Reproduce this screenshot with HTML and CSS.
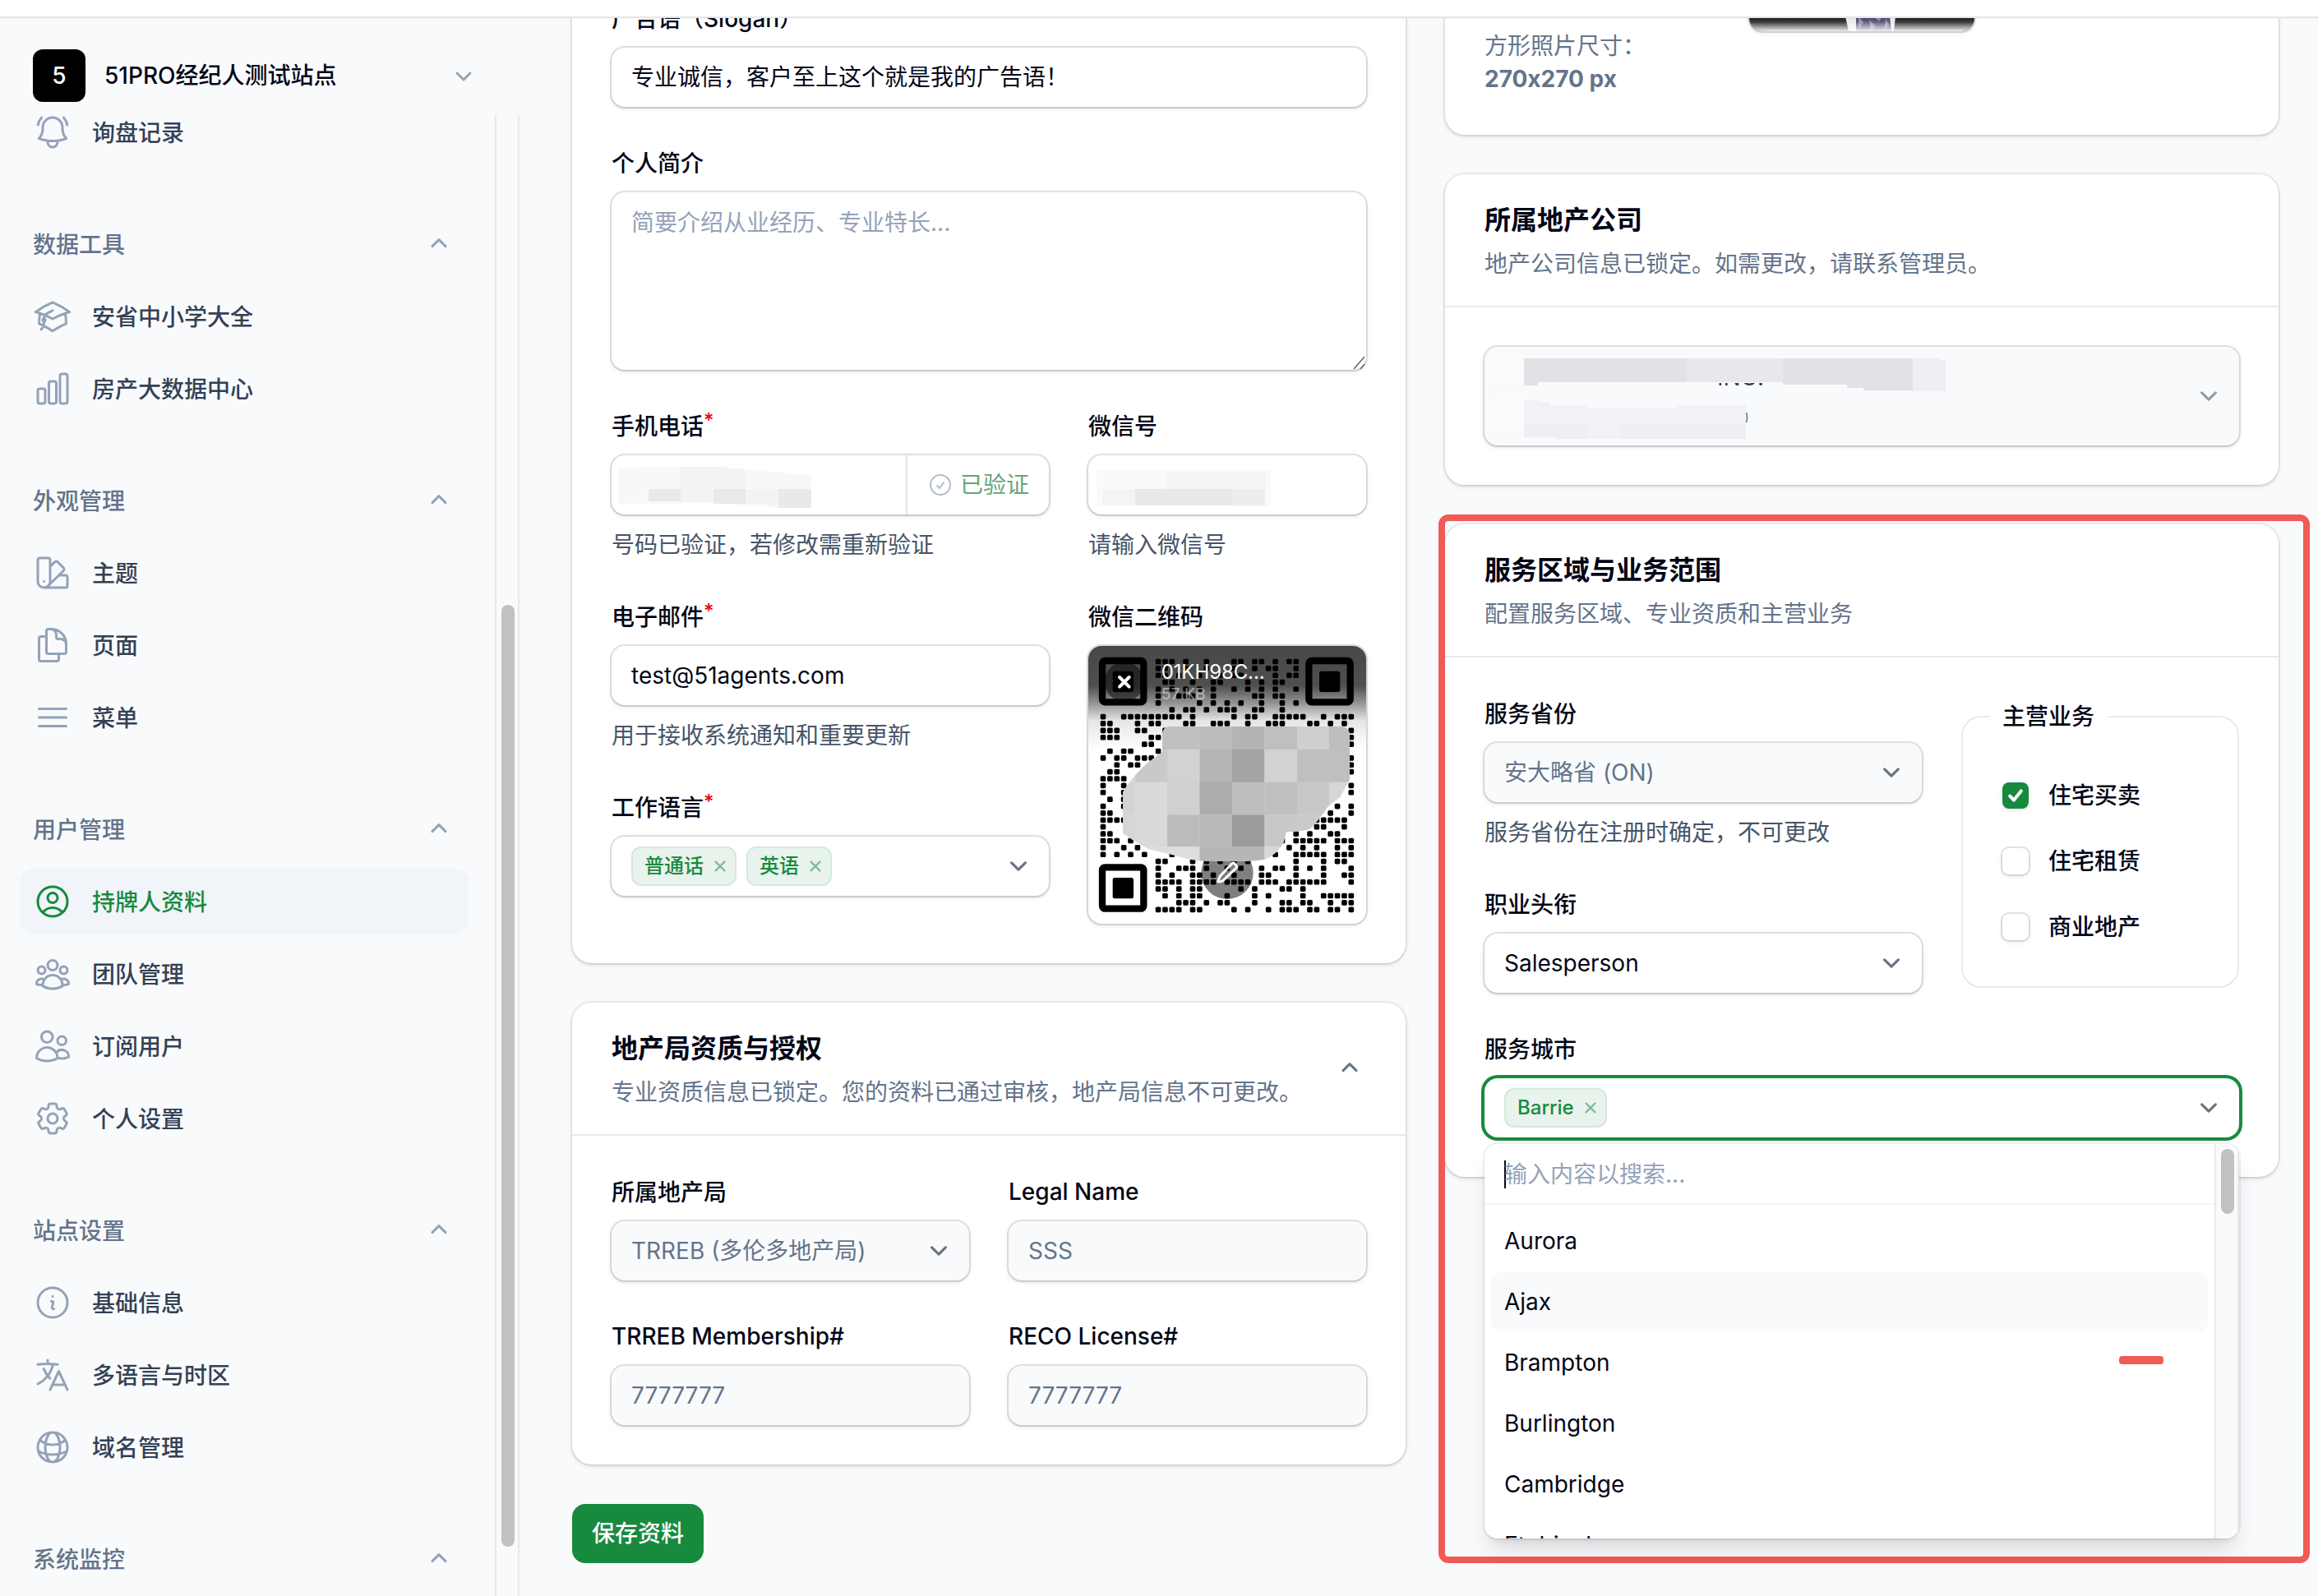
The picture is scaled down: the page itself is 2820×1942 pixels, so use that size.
FILE: index.html
```html
<!DOCTYPE html>
<html lang="zh-CN">
<head>
  <meta charset="utf-8">
  <title>持牌人资料</title>
  <link rel="stylesheet" href="styles.css">
</head>
<body>
<svg class="sprite">
  <symbol id="i-bell" viewBox="0 0 24 24"><path d="M14.857 17.082a23.848 23.848 0 0 0 5.454-1.31A8.967 8.967 0 0 1 18 9.75V9A6 6 0 0 0 6 9v.75a8.967 8.967 0 0 1-2.312 6.022c1.733.64 3.56 1.085 5.455 1.31m5.714 0a24.255 24.255 0 0 1-5.714 0m5.714 0a3 3 0 1 1-5.714 0M3.124 7.5A8.969 8.969 0 0 1 5.292 3m13.416 0a8.969 8.969 0 0 1 2.168 4.5"/></symbol>
  <symbol id="i-cap" viewBox="0 0 24 24"><path d="M4.26 10.147a60.438 60.438 0 0 0-.491 6.347A48.62 48.62 0 0 1 12 20.904a48.62 48.62 0 0 1 8.232-4.41 60.46 60.46 0 0 0-.491-6.347m-15.482 0a50.636 50.636 0 0 0-2.658-.813A59.906 59.906 0 0 1 12 3.493a59.903 59.903 0 0 1 10.399 5.84c-.896.248-1.783.52-2.658.814m-15.482 0A50.717 50.717 0 0 1 12 13.489a50.702 50.702 0 0 1 7.74-3.342M6.75 15a.75.75 0 1 0 0-1.5.75.75 0 0 0 0 1.5Zm0 0v-3.675A55.378 55.378 0 0 1 12 8.443m-7.007 11.55A5.981 5.981 0 0 0 6.75 15.75v-1.5"/></symbol>
  <symbol id="i-chart" viewBox="0 0 24 24"><path d="M3 13.125C3 12.504 3.504 12 4.125 12h2.25c.621 0 1.125.504 1.125 1.125v6.75C7.5 20.496 6.996 21 6.375 21h-2.25A1.125 1.125 0 0 1 3 19.875v-6.75ZM9.75 8.625c0-.621.504-1.125 1.125-1.125h2.25c.621 0 1.125.504 1.125 1.125v11.25c0 .621-.504 1.125-1.125 1.125h-2.25a1.125 1.125 0 0 1-1.125-1.125V8.625ZM16.5 4.125c0-.621.504-1.125 1.125-1.125h2.25C20.496 3 21 3.504 21 4.125v15.75c0 .621-.504 1.125-1.125 1.125h-2.25a1.125 1.125 0 0 1-1.125-1.125V4.125Z"/></symbol>
  <symbol id="i-swatch" viewBox="0 0 24 24"><path d="M4.098 19.902a3.75 3.75 0 0 0 5.304 0l6.401-6.402M6.75 21A3.75 3.75 0 0 1 3 17.25V4.125C3 3.504 3.504 3 4.125 3h5.25c.621 0 1.125.504 1.125 1.125v4.072M6.75 21a3.75 3.75 0 0 0 3.75-3.75V8.197M6.75 21h13.125c.621 0 1.125-.504 1.125-1.125v-5.25c0-.621-.504-1.125-1.125-1.125h-4.072M10.5 8.197l2.88-2.88c.438-.439 1.15-.439 1.59 0l3.712 3.713c.44.44.44 1.152 0 1.59l-2.879 2.88M6.75 17.25h.008v.008H6.75v-.008Z"/></symbol>
  <symbol id="i-pages" viewBox="0 0 24 24"><path d="M15.75 17.25v3.375c0 .621-.504 1.125-1.125 1.125h-9.75a1.125 1.125 0 0 1-1.125-1.125V7.875c0-.621.504-1.125 1.125-1.125H6.75a9.06 9.06 0 0 1 1.5.124m7.5 10.376h3.375c.621 0 1.125-.504 1.125-1.125V11.25c0-4.46-3.243-8.161-7.5-8.876a9.06 9.06 0 0 0-1.5-.124H9.375c-.621 0-1.125.504-1.125 1.125v3.5m7.5 10.375H9.375a1.125 1.125 0 0 1-1.125-1.125v-9.25m12 6.625v-1.875a3.375 3.375 0 0 0-3.375-3.375h-1.5a1.125 1.125 0 0 1-1.125-1.125v-1.5a3.375 3.375 0 0 0-3.375-3.375H9.75"/></symbol>
  <symbol id="i-bars" viewBox="0 0 24 24"><path d="M3.75 6.75h16.5M3.75 12h16.5m-16.5 5.25h16.5"/></symbol>
  <symbol id="i-user" viewBox="0 0 24 24"><path d="M17.982 18.725A7.488 7.488 0 0 0 12 15.75a7.488 7.488 0 0 0-5.982 2.975m11.963 0a9 9 0 1 0-11.963 0m11.963 0A8.966 8.966 0 0 1 12 21a8.966 8.966 0 0 1-5.982-2.275M15 9.75a3 3 0 1 1-6 0 3 3 0 0 1 6 0Z"/></symbol>
  <symbol id="i-group" viewBox="0 0 24 24"><path d="M18 18.72a9.094 9.094 0 0 0 3.741-.479 3 3 0 0 0-4.682-2.72m.94 3.198.001.031c0 .225-.012.447-.037.666A11.944 11.944 0 0 1 12 21c-2.17 0-4.207-.576-5.963-1.584A6.062 6.062 0 0 1 6 18.719m12 0a5.971 5.971 0 0 0-.941-3.197m0 0A5.995 5.995 0 0 0 12 12.75a5.995 5.995 0 0 0-5.058 2.772m0 0a3 3 0 0 0-4.681 2.72 8.986 8.986 0 0 0 3.74.477m.94-3.197a5.971 5.971 0 0 0-.94 3.197M15 6.75a3 3 0 1 1-6 0 3 3 0 0 1 6 0Zm6 3a2.25 2.25 0 1 1-4.5 0 2.25 2.25 0 0 1 4.5 0Zm-13.5 0a2.25 2.25 0 1 1-4.5 0 2.25 2.25 0 0 1 4.5 0Z"/></symbol>
  <symbol id="i-users" viewBox="0 0 24 24"><path d="M15 19.128a9.38 9.38 0 0 0 2.625.372 9.337 9.337 0 0 0 4.121-.952 4.125 4.125 0 0 0-7.533-2.493M15 19.128v-.003c0-1.113-.285-2.16-.786-3.07M15 19.128v.106A12.318 12.318 0 0 1 8.624 21c-2.331 0-4.512-.645-6.374-1.766l-.001-.109a6.375 6.375 0 0 1 11.964-3.07M12 6.375a3.375 3.375 0 1 1-6.75 0 3.375 3.375 0 0 1 6.75 0Zm8.25 2.25a2.625 2.625 0 1 1-5.25 0 2.625 2.625 0 0 1 5.25 0Z"/></symbol>
  <symbol id="i-cog" viewBox="0 0 24 24"><path d="M9.594 3.94c.09-.542.56-.94 1.11-.94h2.593c.55 0 1.02.398 1.11.94l.213 1.281c.063.374.313.686.645.87.074.04.147.083.22.127.325.196.72.257 1.075.124l1.217-.456a1.125 1.125 0 0 1 1.37.49l1.296 2.247a1.125 1.125 0 0 1-.26 1.431l-1.003.827c-.293.241-.438.613-.43.992a7.723 7.723 0 0 1 0 .255c-.008.378.137.75.43.991l1.004.827c.424.35.534.955.26 1.43l-1.298 2.247a1.125 1.125 0 0 1-1.369.491l-1.217-.456c-.355-.133-.75-.072-1.076.124a6.47 6.47 0 0 1-.22.128c-.331.183-.581.495-.644.869l-.213 1.281c-.09.543-.56.94-1.11.94h-2.594c-.55 0-1.019-.398-1.11-.94l-.213-1.281c-.062-.374-.312-.686-.644-.87a6.52 6.52 0 0 1-.22-.127c-.325-.196-.72-.257-1.076-.124l-1.217.456a1.125 1.125 0 0 1-1.369-.49l-1.297-2.247a1.125 1.125 0 0 1 .26-1.431l1.004-.827c.292-.24.437-.613.43-.991a6.932 6.932 0 0 1 0-.255c.007-.38-.138-.751-.43-.992l-1.004-.827a1.125 1.125 0 0 1-.26-1.43l1.297-2.247a1.125 1.125 0 0 1 1.37-.491l1.216.456c.356.133.751.072 1.076-.124.072-.044.146-.086.22-.128.332-.183.582-.495.644-.869l.214-1.28Z"/><path d="M15 12a3 3 0 1 1-6 0 3 3 0 0 1 6 0Z"/></symbol>
  <symbol id="i-info" viewBox="0 0 24 24"><path d="m11.25 11.25.041-.02a.75.75 0 0 1 1.063.852l-.708 2.836a.75.75 0 0 0 1.063.853l.041-.021M21 12a9 9 0 1 1-18 0 9 9 0 0 1 18 0Zm-9-3.75h.008v.008H12V8.25Z"/></symbol>
  <symbol id="i-lang" viewBox="0 0 24 24"><path d="m10.5 21 5.25-11.25L21 21m-9-3h7.5M3 5.621a48.474 48.474 0 0 1 6-.371m0 0c1.12 0 2.233.038 3.334.114M9 5.25V3m3.334 2.364C11.176 10.658 7.69 15.08 3 17.502m9.334-12.138c.896.061 1.785.147 2.666.257m-4.589 8.495a18.023 18.023 0 0 1-3.827-5.802"/></symbol>
  <symbol id="i-globe" viewBox="0 0 24 24"><path d="M12 21a9.004 9.004 0 0 0 8.716-6.747M12 21a9.004 9.004 0 0 1-8.716-6.747M12 21c2.485 0 4.5-4.03 4.5-9S14.485 3 12 3m0 18c-2.485 0-4.5-4.03-4.5-9S9.515 3 12 3m0 0a8.997 8.997 0 0 1 7.843 4.582M12 3a8.997 8.997 0 0 0-7.843 4.582m15.686 0A11.953 11.953 0 0 1 12 10.5c-2.998 0-5.74-1.1-7.843-2.918m15.686 0A8.959 8.959 0 0 1 21 12c0 .778-.099 1.533-.284 2.253m0 0A17.919 17.919 0 0 1 12 16.5c-3.162 0-6.133-.815-8.716-2.247m0 0A9.015 9.015 0 0 1 3 12c0-1.605.42-3.113 1.157-4.418"/></symbol>
  <symbol id="i-check-circle" viewBox="0 0 24 24"><path d="M9 12.75 11.25 15 15 9.75M21 12a9 9 0 1 1-18 0 9 9 0 0 1 18 0Z"/></symbol>
  <symbol id="i-up" viewBox="0 0 20 20"><path d="m6 11.3 4-4 4 4"/></symbol>
  <symbol id="i-down" viewBox="0 0 20 20"><path d="m6 8.5 4 4 4-4"/></symbol>
  <symbol id="i-select" viewBox="0 0 20 20"><path d="m6 8 4 4 4-4"/></symbol>
  <symbol id="i-x" viewBox="0 0 20 20"><path class="bold" d="m5.500 5.500 9 9m0-9-9 9"/></symbol>
</svg>

<div class="topbar"></div>
<div class="layout">
  <aside class="sidebar">
    <div class="tenant">
      <span class="tenant-avatar">5</span>
      <span class="tenant-name">51PRO经纪人测试站点</span>
      <svg class="chev"><use href="#i-down"/></svg>
    </div>
    <div class="nav-wrap">
      <nav class="nav">
        <div class="nav-group">
          <a class="nav-item"><svg><use href="#i-bell"/></svg><span>询盘记录</span></a>
        </div>
        <div class="nav-group">
          <div class="nav-title"><span>数据工具</span><svg class="chev"><use href="#i-up"/></svg></div>
          <a class="nav-item"><svg><use href="#i-cap"/></svg><span>安省中小学大全</span></a>
          <a class="nav-item"><svg><use href="#i-chart"/></svg><span>房产大数据中心</span></a>
        </div>
        <div class="nav-group">
          <div class="nav-title"><span>外观管理</span><svg class="chev"><use href="#i-up"/></svg></div>
          <a class="nav-item"><svg><use href="#i-swatch"/></svg><span>主题</span></a>
          <a class="nav-item"><svg><use href="#i-pages"/></svg><span>页面</span></a>
          <a class="nav-item"><svg><use href="#i-bars"/></svg><span>菜单</span></a>
        </div>
        <div class="nav-group">
          <div class="nav-title"><span>用户管理</span><svg class="chev"><use href="#i-up"/></svg></div>
          <a class="nav-item active"><svg><use href="#i-user"/></svg><span>持牌人资料</span></a>
          <a class="nav-item"><svg><use href="#i-group"/></svg><span>团队管理</span></a>
          <a class="nav-item"><svg><use href="#i-users"/></svg><span>订阅用户</span></a>
          <a class="nav-item"><svg><use href="#i-cog"/></svg><span>个人设置</span></a>
        </div>
        <div class="nav-group">
          <div class="nav-title"><span>站点设置</span><svg class="chev"><use href="#i-up"/></svg></div>
          <a class="nav-item"><svg><use href="#i-info"/></svg><span>基础信息</span></a>
          <a class="nav-item"><svg><use href="#i-lang"/></svg><span>多语言与时区</span></a>
          <a class="nav-item"><svg><use href="#i-globe"/></svg><span>域名管理</span></a>
        </div>
        <div class="nav-group">
          <div class="nav-title"><span>系统监控</span><svg class="chev"><use href="#i-up"/></svg></div>
        </div>
      </nav>
      <div class="scrollbar"><div class="thumb"></div></div>
    </div>
  </aside>

  <main class="main">
    <div class="col">
      <section class="card card-cut">
        <div class="card-body profile">
          <div class="field">
            <label>广告语（Slogan）</label>
            <div class="input">专业诚信，客户至上这个就是我的广告语！</div>
          </div>
          <div class="field">
            <label>个人简介</label>
            <div class="input textarea">简要介绍从业经历、专业特长...
              <svg class="resizer" viewBox="0 0 16 18"><path d="M1 17 14 2M9 17l5-6"/></svg>
            </div>
          </div>
          <div class="grid-wide">
            <div class="stack">
              <div class="field">
                <label>手机电话<sup>*</sup></label>
                <div class="input phone">
                  <svg class="redacted" viewBox="0 0 358 72">
                    <path fill="#f8f8f8" d="M8 16h27v-2h105v2h22v2h30v2h20v3h31v41h-53v-3h-39v-4H84v2H8z"/>
                    <path fill="#f3f3f3" d="M84 14h56v3h22v24H84zM84 41h158v20H190v-2h-27v-2H84z"/>
                    <path fill="#e9e9e9" d="M45 41h39v15H45zM124 41h39v18h-39zM203 41h40v23h-40z"/>
                  </svg>
                  <div class="suffix"><svg><use href="#i-check-circle"/></svg>已验证</div>
                </div>
                <p class="hint">号码已验证，若修改需重新验证</p>
              </div>
              <div class="field">
                <label>电子邮件<sup>*</sup></label>
                <div class="input">test@51agents.com</div>
                <p class="hint">用于接收系统通知和重要更新</p>
              </div>
              <div class="field">
                <label>工作语言<sup>*</sup></label>
                <div class="input select">
                  <div class="chips">
                    <span class="chip">普通话<svg><use href="#i-x"/></svg></span>
                    <span class="chip">英语<svg><use href="#i-x"/></svg></span>
                  </div>
                  <svg class="arrow"><use href="#i-select"/></svg>
                </div>
              </div>
            </div>
            <div class="stack">
              <div class="field">
                <label>微信号</label>
                <div class="input flush">
                  <svg class="redacted" viewBox="0 0 338 72">
                    <path fill="#fafafa" d="M10 18h212v44H10z"/>
                    <path fill="#f4f4f4" d="M96 20h119v21H96zM17 41h40v19H17z"/>
                    <path fill="#e9e9e9" d="M57 41h118v20H57z"/>
                    <path fill="#ededed" d="M175 41h40v20h-40z"/>
                  </svg>
                </div>
                <p class="hint">请输入微信号</p>
              </div>
              <div class="field">
                <label>微信二维码</label>
                <div class="qr">
                  <svg viewBox="12 12 1014 1014">
                    <defs>
                      <linearGradient id="shade" x1="0" y1="0" x2="0" y2="1">
                        <stop offset="0" stop-color="#000" stop-opacity=".72"/>
                        <stop offset=".38" stop-color="#000" stop-opacity=".69"/>
                        <stop offset=".55" stop-color="#000" stop-opacity=".42"/>
                        <stop offset=".72" stop-color="#000" stop-opacity=".1"/>
                        <stop offset="1" stop-color="#000" stop-opacity="0"/>
                      </linearGradient>
                      <clipPath id="smear"><path d="M282 400V335q0-29 28-29h625q31 2 31 34v160l-36 65-45 35q-35 55-65 80-35 12-85 10l-10 40q-25 45-70 62l-60 6H440q-60-3-120-23l-82-20q-50-22-100-60V545q27-45 72-90 40-35 72-55z"/></clipPath>
                    </defs>
                    <g id="modules"></g>
                    <g class="finder">
                      <rect x="63" y="66" width="151" height="151" rx="10"/><rect class="dot" x="101" y="104" width="76" height="76" rx="8"/>
                      <rect x="817" y="66" width="151" height="151" rx="10"/><rect class="dot" x="855" y="104" width="76" height="76" rx="8"/>
                      <rect x="63" y="820" width="151" height="151" rx="10"/><rect class="dot" x="101" y="858" width="76" height="76" rx="8"/>
                    </g>
                    <rect x="12" y="12" width="1014" height="380" fill="url(#shade)"/>
                    <circle cx="143" cy="143" r="72" fill="#000" fill-opacity=".5"/>
                    <path d="m126 126 35 35m0-35-35 35" stroke="#fff" stroke-width="12" stroke-linecap="round"/>
                    <text x="278" y="131" class="file-name" textLength="378">01KH98C...</text>
                    <text x="278" y="208" class="file-size" textLength="162">57 KB</text>
                    <circle cx="519" cy="841" r="95" fill="#000" fill-opacity=".5"/>
                    <path d="m485 872 8-20 44-46q4-4 8 0l7 8q4 4 0 8l-48 46q-4 4-10 4z" fill="none" stroke="#fff" stroke-width="9" stroke-linejoin="round"/>
                    <g id="mosaic" clip-path="url(#smear)"></g>
                  </svg>
                </div>
              </div>
            </div>
          </div>
        </div>
      </section>

      <section class="card">
        <header class="card-head">
          <div>
            <h3>地产局资质与授权</h3>
            <p>专业资质信息已锁定。您的资料已通过审核，地产局信息不可更改。</p>
          </div>
          <svg class="chev"><use href="#i-up"/></svg>
        </header>
        <div class="card-body grid-half">
          <div class="field">
            <label>所属地产局</label>
            <div class="input select disabled">TRREB (多伦多地产局)<svg class="arrow"><use href="#i-select"/></svg></div>
          </div>
          <div class="field">
            <label lang="en">Legal Name</label>
            <div class="input disabled">SSS</div>
          </div>
          <div class="field">
            <label lang="en">TRREB Membership#</label>
            <div class="input disabled">7777777</div>
          </div>
          <div class="field">
            <label lang="en">RECO License#</label>
            <div class="input disabled">7777777</div>
          </div>
        </div>
      </section>

      <button class="save">保存资料</button>
    </div>

    <div class="col">
      <section class="card card-cut">
        <div class="card-body photo">
          <p class="photo-size">方形照片尺寸：<br><b>270x270 px</b></p>
          <div class="avatar">
            <svg viewBox="0 0 274 18" preserveAspectRatio="none">
              <defs><linearGradient id="fade" x1="0" y1="0" x2="0" y2="1"><stop offset="0" stop-color="#fff" stop-opacity="0"/><stop offset=".35" stop-color="#fff" stop-opacity=".12"/><stop offset="1" stop-color="#fff" stop-opacity=".92"/></linearGradient></defs>
              <path fill="#1d1b1a" d="M0 0h274v18H0z"/>
              <path fill="#e9e9ea" d="M117 0h61l-2 18h-55z"/>
              <path fill="#4b4666" d="M130 0h41l2 18h-43z"/>
              <path fill="#8a86a6" d="M133 0l6 7-6 8zM146 4l8 8-6 6zM152 0l6 6 4-6zM166 2l4 8-6 8z"/>
              <path fill="url(#fade)" d="M0 0h274v18H0z"/>
            </svg>
          </div>
        </div>
      </section>

      <section class="card">
        <header class="card-head">
          <div>
            <h3>所属地产公司</h3>
            <p>地产公司信息已锁定。如需更改，请联系管理员。</p>
          </div>
        </header>
        <div class="card-body">
          <div class="input select disabled company">
            <svg class="redacted" viewBox="0 0 700 120">
              <text x="283" y="47" class="company-name">INC.</text>
              <path fill="#fbfbfc" d="M8 10h370v4h180v30H8zM8 62h50v42H8z"/>
              <path fill="#e1e2e5" d="M48 14h197v29H65v4H48zM363 14h158v39h-60v-3h-20v-4h-78z"/>
              <path fill="#e7e8eb" d="M245 14h118v29H245z"/>
              <path fill="#eeeff2" d="M521 14h34v2h6v38h-40z"/>
              <path fill="#f1f2f5" d="M48 65h18v2h14v4h45v3h110v-3h83v41H86v-2H48z"/>
              <path fill="#eeeff3" d="M48 94h77v18H86v-2H48zM165 94h153v18H165z"/>
              <path stroke="#64748b" fill="none" stroke-width="1.5" d="M318.500 80q2 6 0 12"/>
            </svg>
            <svg class="arrow"><use href="#i-select"/></svg>
          </div>
        </div>
      </section>

      <section class="card service">
        <header class="card-head">
          <div>
            <h3>服务区域与业务范围</h3>
            <p>配置服务区域、专业资质和主营业务</p>
          </div>
        </header>
        <div class="card-body">
          <div class="grid-wide">
            <div class="stack">
              <div class="field">
                <label>服务省份</label>
                <div class="input select disabled">安大略省 (ON)<svg class="arrow"><use href="#i-select"/></svg></div>
                <p class="hint">服务省份在注册时确定，不可更改</p>
              </div>
              <div class="field">
                <label>职业头衔</label>
                <div class="input select">Salesperson<svg class="arrow"><use href="#i-select"/></svg></div>
              </div>
            </div>
            <fieldset>
              <legend>主营业务</legend>
              <div class="check"><span class="box on"><svg viewBox="0 0 16 16"><path d="m4.600 8.300 2.400 2.500 4.400-5.600"/></svg></span>住宅买卖</div>
              <div class="check"><span class="box"></span>住宅租赁</div>
              <div class="check"><span class="box"></span>商业地产</div>
            </fieldset>
          </div>
          <div class="field">
            <label>服务城市</label>
            <div class="input select focus">
              <div class="chips"><span class="chip">Barrie<svg><use href="#i-x"/></svg></span></div>
              <svg class="arrow"><use href="#i-select"/></svg>
              <div class="dropdown">
                <div class="options">
                  <div class="search"><span class="caret"></span>输入内容以搜索...</div>
                  <ul>
                    <li>Aurora</li>
                    <li class="hover">Ajax</li>
                    <li>Brampton</li>
                    <li>Burlington</li>
                    <li>Cambridge</li>
                    <li>Etobicoke</li>
                  </ul>
                </div>
                <div class="scrollbar"><div class="thumb"></div></div>
              </div>
            </div>
          </div>
        </div>
        <div class="mark-box"></div>
        <div class="mark-dash"></div>
      </section>
    </div>
  </main>
</div>

<script>
// QR modules, one list of filled columns per row
var rows = [
  [8,9,10,12,15,19,20,22,23,25,27,28], [8,9,12,15,19,22,24,25,28],
  [8,9,11,14,17,19,20,25,27,28], [9,10,13,16,17,21,23,25,26],
  [8,10,12,14,16,19,21,23,25,28], [8,11,12,13,16,22,23,25,26],
  [8,14,16,18,20,23,26,28], [10,12,13,15,17,18,19,22,23,26],
  [0,3,4,5,6,7,8,9,10,11,13,19,21,22,25,26,27,28,29,32,34,35,36],
  [0,1,5,7,8,12,13,16,17,18,21,24,25,26,30,31,33,35],
  [0,1,2,5,6,9,36], [0,1,2,7,8,36], [6,7,36], [1,3,4,8], [0,2,3,5,6,7,36],
  [2,4,5,36], [1,2,36], [0,1,2,3], [0,3,36], [0,3,36], [1,3], [0,3,34,36],
  [0,1,33,36], [0,1,2,3,31,32,33,34,35], [0,31,32,35], [0,1,28,30,33,34],
  [0,1,2,4,26,28,29,30,31,32,34,35,36], [0,3,5,27,29,31,34,36],
  [0,2,4,6,10,25,28,29,30,31,32,34,35,36], [8,9,13,15,17,19,21,28,32,34,35],
  [8,11,12,13,15,18,20,23,25,26,28,30,32,36], [8,10,13,14,16,19,23,24,28,32,35,36],
  [8,9,10,11,13,14,15,16,18,19,20,21,23,24,25,27,28,29,30,31,32,36],
  [8,9,11,13,14,20,22,26,27,29], [9,13,11,14,18,22,24,29,32,33,34,35,36],
  [11,12,13,15,17,18,22,26,27,29,30,33,35,36],
  [8,9,10,11,13,14,19,21,24,26,27,28,30,31,33,34,36]
];
var step = 25.15;
document.getElementById('modules').innerHTML = rows.map(function (cols, r) {
  return cols.map(function (c) {
    return '<rect x="' + (56 + c * step) + '" y="' + (59 + r * step) + '" width="20" height="20" rx="5"/>';
  }).join('');
}).join('');

// pixelated patch over the code
var xs = [120, 183, 300, 418, 537, 655, 774, 891, 980];
var ys = [300, 390, 509, 628, 745, 810];
var shades = [
  ['c0','c0','c0','bc','b4','bf','cf','be'],
  ['d8','c9','d2','b5','a4','d2','bf','bf'],
  ['d4','da','d0','ac','be','c0','c8','d6'],
  ['d6','d9','bc','ba','9b','c8','ca','ca'],
  ['dc','dc','de','b6','b6','d8','d8','d8']
];
document.getElementById('mosaic').innerHTML = shades.map(function (row, r) {
  return row.map(function (s, c) {
    return '<rect x="' + xs[c] + '" y="' + ys[r] + '" width="' + (xs[c + 1] - xs[c] + 1) + '" height="' + (ys[r + 1] - ys[r] + 1) + '" fill="#' + s + s + s + '"/>';
  }).join('');
}).join('');
</script>
</body>
</html>
```
FILE: styles.css
```css
* {
  box-sizing: border-box;
}

body {
  margin: 0;
  height: 1942px;
  overflow: hidden;
  background: #f9fafc;
  color: #020617;
  font-family: Inter, "Noto Sans CJK SC", sans-serif;
  font-size: 28px;
  line-height: 40px;
}

h3, p, ul {
  margin: 0;
  padding: 0;
}

svg {
  display: block;
  flex: none;
  fill: none;
}

symbol path {
  fill: none;
  stroke: currentColor;
  stroke-width: 1.5;
  stroke-linecap: round;
  stroke-linejoin: round;
}

symbol .bold {
  stroke-width: 1.9;
}

.sprite {
  position: absolute;
  width: 0;
  height: 0;
}

.topbar {
  position: relative;
  z-index: 5;
  height: 20px;
  background: #fff;
  box-shadow: 0 2px 0 #e5e6e9, 0 3px 3px rgba(0, 0, 0, .04);
}

.layout {
  display: flex;
  height: 1922px;
  overflow: hidden;
}

.chev {
  width: 40px;
  height: 40px;
  color: #94a3b8;
}

/* sidebar */

.sidebar {
  display: flex;
  flex-direction: column;
  width: 632px;
  flex: none;
}

.tenant {
  display: flex;
  align-items: center;
  height: 120px;
  flex: none;
  padding: 24px 48px 0 40px;
}

.tenant-avatar {
  width: 64px;
  height: 64px;
  margin-right: 23px;
  border-radius: 12px;
  background: #000;
  color: #fff;
  font-weight: 500;
  line-height: 64px;
  text-align: center;
}

.tenant-name {
  flex: 1;
  font-weight: 500;
}

.nav-wrap {
  display: flex;
  flex: 1;
  min-height: 0;
  overflow: hidden;
}

.nav {
  display: flex;
  flex-direction: column;
  gap: 56px;
  flex: 1;
  padding: 0 32px 0 24px;
  margin-top: -19px;
}

.nav-group {
  display: flex;
  flex-direction: column;
  gap: 8px;
}

.nav-title, .nav-item {
  display: flex;
  align-items: center;
  height: 80px;
  padding: 0 16px;
  font-weight: 500;
}

.nav span {
  padding-top: 2px;
}

.nav-title {
  justify-content: space-between;
  color: #64748b;
}

.nav-item {
  gap: 24px;
  border-radius: 16px;
  color: #334155;
}

.nav-item svg {
  width: 48px;
  height: 48px;
  color: #94a3b8;
}

.nav-item.active {
  background: #f1f4f9;
  color: #178a3e;
}

.nav-item.active svg {
  color: #178a3e;
}

.scrollbar {
  width: 30px;
  flex: none;
  border: solid #e8e8e8;
  border-width: 0 2px;
  background: #fafafa;
}

.thumb {
  border-radius: 8px;
  background: #c1c1c1;
}

.nav-wrap .thumb {
  width: 16px;
  height: 1146px;
  margin: 596px 0 0 6px;
}

/* content */

.main {
  display: grid;
  grid-template-columns: 1014px 1014px;
  gap: 48px;
  flex: 1;
  padding: 0 48px 0 64px;
}

.col, .stack {
  display: flex;
  flex-direction: column;
  gap: 48px;
}

.card {
  position: relative;
  border-radius: 24px;
  background: #fff;
  box-shadow: 0 0 0 2px rgba(2, 6, 23, .055), 0 2px 6px rgba(0, 0, 0, .1), 0 2px 4px -2px rgba(0, 0, 0, .12);
}

/* sections scrolled under the top bar */
.card-cut {
  border-radius: 0 0 24px 24px;
}

.card-head {
  display: flex;
  align-items: center;
  justify-content: space-between;
  height: 162px;
  padding: 32px 48px;
  border-bottom: 2px solid #e5eaf2;
}

.card-head h3 {
  margin-bottom: 8px;
  font-size: 32px;
  font-weight: 600;
  line-height: 48px;
}

.card-head p {
  height: 40px;
  padding-top: 1px;
  color: #64748b;
}

.card-head .chev {
  color: #64748b;
}

.card-body {
  display: flex;
  flex-direction: column;
  gap: 48px;
  padding: 48px;
}

.profile {
  padding-top: 0;
  margin-top: -18px;
}

.grid-wide {
  display: grid;
  grid-template-columns: 532px 338px;
  gap: 48px;
}

.grid-half {
  display: grid;
  grid-template-columns: 1fr 1fr;
}

.field {
  display: flex;
  flex-direction: column;
  gap: 16px;
}

label {
  height: 40px;
  padding-top: 1px;
  font-weight: 500;
}

label:lang(en) {
  padding-top: 0;
}

sup {
  position: relative;
  top: -9px;
  color: #e7000b;
  font-size: 24px;
  line-height: 0;
  vertical-align: baseline;
}

.hint {
  height: 40px;
  padding-top: 1px;
  color: #475569;
}

.input {
  position: relative;
  display: flex;
  align-items: center;
  height: 72px;
  padding: 0 24px;
  border-radius: 16px;
  background: #fff;
  box-shadow: 0 0 0 2px rgba(2, 6, 23, .11), 0 2px 6px rgba(0, 0, 0, .1), 0 2px 4px -2px rgba(0, 0, 0, .14);
}

.textarea {
  align-items: flex-start;
  height: 216px;
  padding-top: 17px;
  color: #94a3b8;
}

.resizer {
  position: absolute;
  right: 0;
  bottom: 0;
  width: 16px;
  height: 18px;
  stroke: #666;
  stroke-width: 1.5;
}

.disabled {
  background: #f9fafc;
  color: #64748b;
}

.select {
  justify-content: space-between;
  padding-right: 16px;
}

.arrow {
  width: 42px;
  height: 42px;
  color: #6b7280;
}

.focus {
  box-shadow: 0 0 0 4px #178a3e;
}

.phone, .flush, .company {
  padding-left: 0;
}

.phone {
  justify-content: space-between;
  padding-right: 0;
}

.phone .redacted {
  width: 358px;
  height: 72px;
}

.flush .redacted {
  width: 338px;
  height: 72px;
}

.company {
  height: 120px;
}

.company .redacted {
  width: 700px;
  height: 120px;
}

.company .arrow {
  opacity: .7;
}

.company-name {
  fill: #334155;
}

.suffix {
  display: flex;
  align-items: center;
  gap: 8px;
  height: 72px;
  padding: 0 24px;
  border-left: 2px solid #e2e8f0;
  color: #65a577;
}

.suffix svg {
  width: 32px;
  height: 32px;
  color: #b1bdd1;
}

.chips {
  display: flex;
  gap: 12px;
}

.chip {
  display: flex;
  align-items: center;
  gap: 8px;
  height: 48px;
  padding: 0 6px 0 14px;
  border: 2px solid #d4e9db;
  border-radius: 12px;
  background: #e9f3ed;
  color: #178a3e;
  font-size: 24px;
  font-weight: 500;
}

.chip svg {
  width: 24px;
  height: 24px;
  color: #86b896;
}

.qr {
  height: 338px;
  border-radius: 16px;
  overflow: hidden;
  background: #fff;
  box-shadow: 0 0 0 2px rgba(2, 6, 23, .13), 0 2px 6px rgba(0, 0, 0, .1);
}

.finder rect {
  fill: none;
  stroke: #000;
  stroke-width: 25;
}

.finder .dot {
  fill: #000;
  stroke: none;
}

#modules {
  fill: #000;
}

.file-name {
  fill: #fff;
  font-size: 72px;
}

.file-size {
  fill: #fff;
  fill-opacity: .5;
  font-size: 58px;
}

.save {
  align-self: flex-start;
  height: 72px;
  padding: 0 24px;
  border: 0;
  border-radius: 16px;
  background: #178a3e;
  color: #fff;
  font: inherit;
  font-weight: 500;
}

/* right column */

.photo {
  flex-direction: row;
  gap: 0;
  height: 144px;
  padding-top: 0;
}

.photo-size {
  width: 322px;
  padding-top: 16px;
  color: #64748b;
}

.photo-size b {
  font-weight: 700;
}

.avatar {
  width: 274px;
  height: 18px;
  border-radius: 0 0 16px 16px;
  overflow: hidden;
  box-shadow: 0 0 0 2px rgba(2, 6, 23, .13), 0 2px 6px rgba(0, 0, 0, .1);
}

.avatar svg {
  width: 100%;
  height: 100%;
}

fieldset {
  display: flex;
  flex-direction: column;
  gap: 32px;
  min-width: 0;
  height: 354px;
  margin: 0;
  padding: 48px;
  border: 2px solid #e5eaf2;
  border-radius: 24px;
}

legend {
  margin-left: -16px;
  padding: 0 16px;
  font-weight: 500;
  line-height: 48px;
}

.check {
  display: flex;
  align-items: center;
  gap: 24px;
  height: 48px;
  flex: none;
  font-weight: 500;
}

.box {
  width: 32px;
  height: 32px;
  border-radius: 8px;
  background: #fff;
  box-shadow: 0 0 0 2px rgba(2, 6, 23, .11), 0 2px 6px rgba(0, 0, 0, .1);
}

.box.on {
  background: #178a3e;
  box-shadow: 0 2px 6px rgba(0, 0, 0, .1);
}

.box path {
  stroke: #fff;
  stroke-width: 2;
  stroke-linecap: round;
  stroke-linejoin: round;
}

.dropdown {
  position: absolute;
  z-index: 2;
  top: 80px;
  left: 0;
  display: flex;
  width: 918px;
  height: 480px;
  border-radius: 16px;
  overflow: hidden;
  background: #fff;
  box-shadow: 0 0 0 2px rgba(2, 6, 23, .06), 0 20px 30px -6px rgba(0, 0, 0, .12), 0 8px 12px -8px rgba(0, 0, 0, .12);
}

.options {
  flex: 1;
}

.search {
  display: flex;
  align-items: center;
  height: 74px;
  padding: 1px 24px 0;
  border-bottom: 2px solid #f1f5f9;
  color: #94a3b8;
}

.caret {
  width: 2px;
  height: 34px;
  margin-right: -2px;
  background: #020617;
}

.options ul {
  padding: 8px;
  list-style: none;
}

.options li {
  height: 72px;
  margin-bottom: 2px;
  padding: 0 16px;
  border-radius: 12px;
  line-height: 72px;
}

.options .hover {
  background: #f9fafc;
}

.dropdown .thumb {
  width: 16px;
  height: 79px;
  margin: 6px 0 0 6px;
}

/* annotations */

.mark-box {
  position: absolute;
  z-index: 1;
  top: -12px;
  left: -8px;
  width: 1060px;
  height: 1276px;
  border: 8px solid #f15b55;
  border-radius: 12px;
}

.mark-dash {
  position: absolute;
  z-index: 3;
  top: 1012px;
  left: 820px;
  width: 54px;
  height: 10px;
  border-radius: 4px;
  background: #f15b55;
}
```
